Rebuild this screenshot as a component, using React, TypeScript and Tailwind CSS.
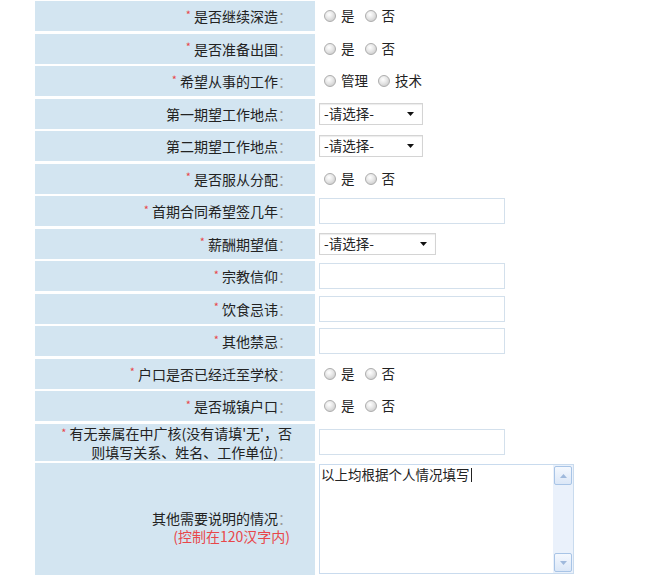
import React from 'react';

type Row =
  | { label: string; req: boolean; kind: 'radio'; options: string[] }
  | { label: string; req: boolean; kind: 'select'; width: string }
  | { label: string; req: boolean; kind: 'input' };

const ROWS: Row[] = [
  { label: '是否继续深造', req: true, kind: 'radio', options: ['是', '否'] },
  { label: '是否准备出国', req: true, kind: 'radio', options: ['是', '否'] },
  { label: '希望从事的工作', req: true, kind: 'radio', options: ['管理', '技术'] },
  { label: '第一期望工作地点', req: false, kind: 'select', width: 'w-[104px]' },
  { label: '第二期望工作地点', req: false, kind: 'select', width: 'w-[104px]' },
  { label: '是否服从分配', req: true, kind: 'radio', options: ['是', '否'] },
  { label: '首期合同希望签几年', req: true, kind: 'input' },
  { label: '薪酬期望值', req: true, kind: 'select', width: 'w-[117px]' },
  { label: '宗教信仰', req: true, kind: 'input' },
  { label: '饮食忌讳', req: true, kind: 'input' },
  { label: '其他禁忌', req: true, kind: 'input' },
  { label: '户口是否已经迁至学校', req: true, kind: 'radio', options: ['是', '否'] },
  { label: '是否城镇户口', req: true, kind: 'radio', options: ['是', '否'] },
];

const Star = () => <span className="text-[#e8474a] text-[11px] mr-[3px] relative -top-[2px]">*</span>;
const Colon = () => <span className="text-[#9a9a9a]">：</span>;

const Radio = ({ text }: { text: string }) => (
  <label className="flex items-center mr-[10px]">
    <span className="w-[12px] h-[12px] rounded-full border border-[#adadad] bg-[radial-gradient(circle_at_40%_35%,#ffffff_0%,#e6e6e6_45%,#c0c0c0_100%)] mr-[5px]" />
    <span>{text}</span>
  </label>
);

const Select = ({ width }: { width: string }) => (
  <div className={`relative h-[22px] ${width} border border-[#d4d4d4] bg-white shadow-[inset_0_1px_1px_rgba(0,0,0,0.08)] flex items-center pl-[4px]`}>
    <span>-请选择-</span>
    <svg className="absolute right-[8px] top-[8px]" width="7" height="4" viewBox="0 0 7 4">
      <path d="M0 0 H7 L3.5 4 Z" fill="#111" />
    </svg>
  </div>
);

const TextInput = () => (
  <div className="h-[26px] w-[186px] border border-[#d3e0ec] bg-white" />
);

const ScrollButton = ({ up }: { up: boolean }) => (
  <div className="h-[19px] w-full border border-[#a8c4e6] rounded-[2px] bg-[linear-gradient(#f4f8fe,#dbe7f7)] flex items-center justify-center">
    <svg width="7" height="4" viewBox="0 0 7 4">
      <path d={up ? 'M0 4 L3.5 0 L7 4 Z' : 'M0 0 H7 L3.5 4 Z'} fill="#9fb9dc" />
    </svg>
  </div>
);

export default function App() {
  return (
    <div className="min-h-screen bg-white pl-[35px] pt-[1px] font-['Noto_Sans_CJK_SC','Noto_Sans',sans-serif] text-[#222] text-[13.5px] leading-none">
      <div className="grid grid-cols-[280px_300px] gap-y-[2.5px]">
        {ROWS.map((row, i) => (
          <React.Fragment key={i}>
            <div className="h-[30px] bg-[#d3e5f1] flex items-center justify-end pr-[23px] text-[14px]">
              {row.req && <Star />}
              <span>{row.label}</span>
              <Colon />
            </div>
            <div className="h-[30px] flex items-center pl-[4px]">
              {row.kind === 'radio' && (
                <div className="flex items-center pl-[5px]">
                  {row.options.map((o) => (
                    <Radio key={o} text={o} />
                  ))}
                </div>
              )}
              {row.kind === 'select' && <Select width={row.width} />}
              {row.kind === 'input' && <TextInput />}
            </div>
          </React.Fragment>
        ))}

        <div className="h-[37px] bg-[#d3e5f1] flex flex-col items-end justify-center pr-[23px] text-[14px] leading-[18px] whitespace-nowrap">
          <div>
            <Star />
            有无亲属在中广核(没有请填'无'，否
          </div>
          <div>
            则填写关系、姓名、工作单位)<Colon />
          </div>
        </div>
        <div className="h-[37px] flex items-center pl-[4px]">
          <TextInput />
        </div>

        <div className="h-[112px] bg-[#d3e5f1] flex flex-col items-end justify-center pr-[23px] text-[14px] leading-[18px] pt-[16px]">
          <div>
            其他需要说明的情况<Colon />
          </div>
          <div className="text-[#e8474a] pr-[2px]">(控制在120汉字内)</div>
        </div>
        <div className="h-[112px] pl-[4px] flex items-center">
          <div className="h-[110px] w-[255px] border border-[#c9dbee] bg-white flex">
            <div className="flex-1 pt-[3px] pl-[1px]">
              以上均根据个人情况填写<span className="inline-block w-px h-[14px] bg-[#222] align-[-2px] ml-px" />
            </div>
            <div className="w-[20px] bg-[#eaf1fb] flex flex-col justify-between p-px">
              <ScrollButton up />
              <ScrollButton up={false} />
            </div>
          </div>
        </div>
      </div>
    </div>
  );
}
